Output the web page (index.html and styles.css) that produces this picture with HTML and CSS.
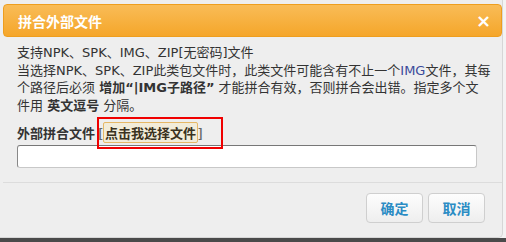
FILE: index.html
```html
<!DOCTYPE html>
<html>
<head>
<meta charset="utf-8">
<link rel="stylesheet" href="styles.css">
</head>
<body>
<div class="page">
  <div class="dialog">
    <div class="header">
      <span class="title">拼合外部文件</span>
      <span class="close">×</span>
    </div>
    <div class="content">
      <p class="desc">支持NPK、SPK、IMG、ZIP[无密码]文件<br>当选择NPK、SPK、ZIP此类包文件时，此类文件可能含有不止一个<span class="img">IMG</span>文件，其每<br>个路径后必须 <b>增加“|IMG子路径”</b> 才能拼合有效，否则拼合会出错。指定多个文<br>件用 <b>英文逗号</b> 分隔。</p>
      <div class="label-row">
        <span class="label">外部拼合文件</span>
        <span class="picker">[<span class="pick-btn">点击我选择文件</span>]</span>
        <span class="mark"></span>
      </div>
      <input class="path" type="text">
    </div>
    <div class="footer">
      <button class="btn">确定</button>
      <button class="btn">取消</button>
    </div>
  </div>
</div>
</body>
</html>
```
FILE: styles.css
```css
html, body {
  margin: 0;
  padding: 0;
}
body {
  background: #4a4a4a;
  width: 506px;
  height: 242px;
  overflow: hidden;
  font-family: "DejaVu Sans", "Noto Sans CJK SC", sans-serif;
  font-size: 13px;
  color: #333;
}
.page {
  height: 238px;
  background: #f3f3f3;
}
.dialog {
  width: 503px;
  height: 238px;
  box-sizing: border-box;
  background: #eeeeee;
  border-right: 1px solid #d6d6d6;
  border-bottom: 1px solid #d6d6d6;
  border-bottom-right-radius: 5px;
  padding-top: 4px;
  display: flex;
  flex-direction: column;
}
.header {
  margin-left: 3px;
  width: 499px;
  height: 33px;
  box-sizing: border-box;
  border: 1px solid #ee9e1e;
  border-radius: 4px;
  background: linear-gradient(#f9bc57, #f5a62a);
  display: flex;
  align-items: center;
  justify-content: space-between;
  padding: 0 10px 0 14px;
}
.title {
  color: #fff;
  font-family: "Noto Sans CJK SC", sans-serif;
  font-weight: bold;
  font-size: 14px;
}
.close {
  color: #fff;
  font-weight: bold;
  font-size: 18px;
  line-height: 1;
}
.content {
  padding: 7px 0 0 17px;
  position: relative;
}
.desc {
  margin: 0;
  line-height: 17.5px;
  white-space: nowrap;
}
.desc b {
  font-weight: bold;
}
.img {
  color: #3a4a9a;
}
.label-row {
  position: relative;
  margin-top: 8px;
  display: flex;
  align-items: center;
  height: 20px;
}
.label {
  font-weight: bold;
  font-family: "Noto Sans CJK SC", sans-serif;
}
.picker {
  margin-left: 3px;
  font-weight: bold;
  color: #666;
  font-family: "Noto Sans CJK SC", sans-serif;
}
.pick-btn {
  border: 1px solid #e6b866;
  border-radius: 2px;
  padding: 0 1px;
  background: #f2ecd9;
  color: #3a3220;
}
.mark {
  position: absolute;
  left: 80px;
  top: -5px;
  width: 122px;
  height: 28px;
  border: 2px solid #f00000;
}
.path {
  display: block;
  margin-top: 3px;
  width: 460px;
  height: 23px;
  box-sizing: border-box;
  border: 1px solid #c8c8c8;
  border-top-color: #777;
  border-left-color: #888;
  border-radius: 3px;
  background: #fff;
  padding: 0 4px;
}
.footer {
  margin-top: 14px;
  border-top: 1px solid #dcdcdc;
  margin-left: 3px;
  display: flex;
  justify-content: flex-end;
  gap: 5px;
  padding: 10px 17px 0 0;
}
.btn {
  width: 57px;
  height: 30px;
  border: 1px solid #cfcfcf;
  border-radius: 4px;
  background: linear-gradient(#fdfdfd, #eeeeee);
  color: #2b8cc4;
  font-family: "Noto Sans CJK SC", sans-serif;
  font-weight: bold;
  font-size: 14px;
  padding: 0;
}
```
